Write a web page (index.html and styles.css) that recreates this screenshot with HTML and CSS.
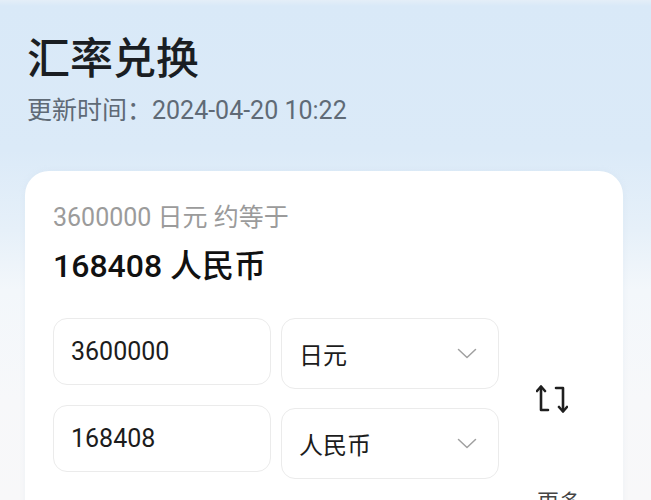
FILE: index.html
```html
<!DOCTYPE html>
<html lang="zh-CN">
<head>
<meta charset="utf-8">
<title>汇率兑换</title>
<link rel="stylesheet" href="styles.css">
</head>
<body>
<div class="page">
  <header class="head">
    <h1 class="title">汇率兑换</h1>
    <p class="updated">更新时间：2024-04-20 10:22</p>
  </header>
  <section class="card">
    <p class="summary">3600000 日元 约等于</p>
    <p class="result">168408 人民币</p>
    <div class="converter">
      <div class="col inputs">
        <div class="field">3600000</div>
        <div class="field">168408</div>
      </div>
      <div class="col selects">
        <div class="select"><span>日元</span>
          <svg class="chev" width="20" height="11" viewBox="0 0 20 11"><path d="M1.5 1.5 L10 9.5 L18.5 1.5" fill="none" stroke="#a0a0a0" stroke-width="1.5" stroke-linecap="round" stroke-linejoin="round"/></svg>
        </div>
        <div class="select"><span>人民币</span>
          <svg class="chev" width="20" height="11" viewBox="0 0 20 11"><path d="M1.5 1.5 L10 9.5 L18.5 1.5" fill="none" stroke="#a0a0a0" stroke-width="1.5" stroke-linecap="round" stroke-linejoin="round"/></svg>
        </div>
      </div>
      <div class="swap">
        <svg width="32" height="30" viewBox="0 0 32 30"><g fill="none" stroke="#1f1f1f" stroke-width="2.6" stroke-linecap="round" stroke-linejoin="round"><path d="M5 3 V26 H12"/><path d="M1 7 L5 2.5 L9 7"/><path d="M27 27 V4 H20"/><path d="M23 23 L27 27.5 L31 23"/></g></svg>
      </div>
    </div>
    <div class="foot">更多</div>
  </section>
</div>
</body>
</html>
```
FILE: styles.css
```css
html, body {
  margin: 0;
  padding: 0;
}
body {
  width: 651px;
  height: 500px;
  overflow: hidden;
  font-family: "Roboto", "Noto Sans CJK SC", sans-serif;
  background: linear-gradient(180deg, #e4eef8 0px, #d9e9f8 6px, #dbeaf8 150px, #e6f0f9 230px, #f3f7fb 290px, #f7f8fa 400px, #f8f8f9 500px);
}
.page {
  display: flex;
  flex-direction: column;
}
.head {
  padding: 34px 0 0 27px;
}
.title {
  margin: 0;
  font-size: 43px;
  line-height: 50px;
  font-weight: 500;
  color: #1a1e23;
}
.updated {
  margin: 12px 0 0;
  font-size: 25px;
  line-height: 30px;
  color: #5f6a76;
}
.card {
  margin: 45px 28px 0 25px;
  background: #ffffff;
  border-radius: 24px 24px 0 0;
  padding: 32px 18px 0 28px;
  height: 400px;
  box-shadow: 0 0 6px rgba(180, 200, 220, 0.15);
}
.summary {
  margin: 0;
  font-size: 25px;
  line-height: 30px;
  color: #9b9b9b;
}
.result {
  margin: 14px 0 0;
  font-size: 32px;
  line-height: 38px;
  font-weight: 500;
  color: #111;
}
.converter {
  margin-top: 33px;
  display: flex;
  align-items: flex-start;
}
.col {
  display: flex;
  flex-direction: column;
  width: 218px;
}
.inputs {
  gap: 20px;
  margin-right: 10px;
}
.selects {
  gap: 19px;
}
.field, .select {
  box-sizing: border-box;
  border: 1px solid #ebebeb;
  border-radius: 14px;
  display: flex;
  align-items: center;
  background: #fff;
  color: #1c1c1c;
}
.field {
  height: 67px;
  padding-left: 17px;
  font-size: 25px;
}
.select {
  height: 71px;
  padding: 0 21px 0 17px;
  justify-content: space-between;
  font-size: 24px;
}
.chev {
  display: block;
}
.swap {
  width: 106px;
  align-self: stretch;
  display: flex;
  align-items: center;
  justify-content: center;
}
.foot {
  margin-top: 9px;
  padding-left: 484px;
  font-size: 22px;
  line-height: 30px;
  color: #444;
}
```
